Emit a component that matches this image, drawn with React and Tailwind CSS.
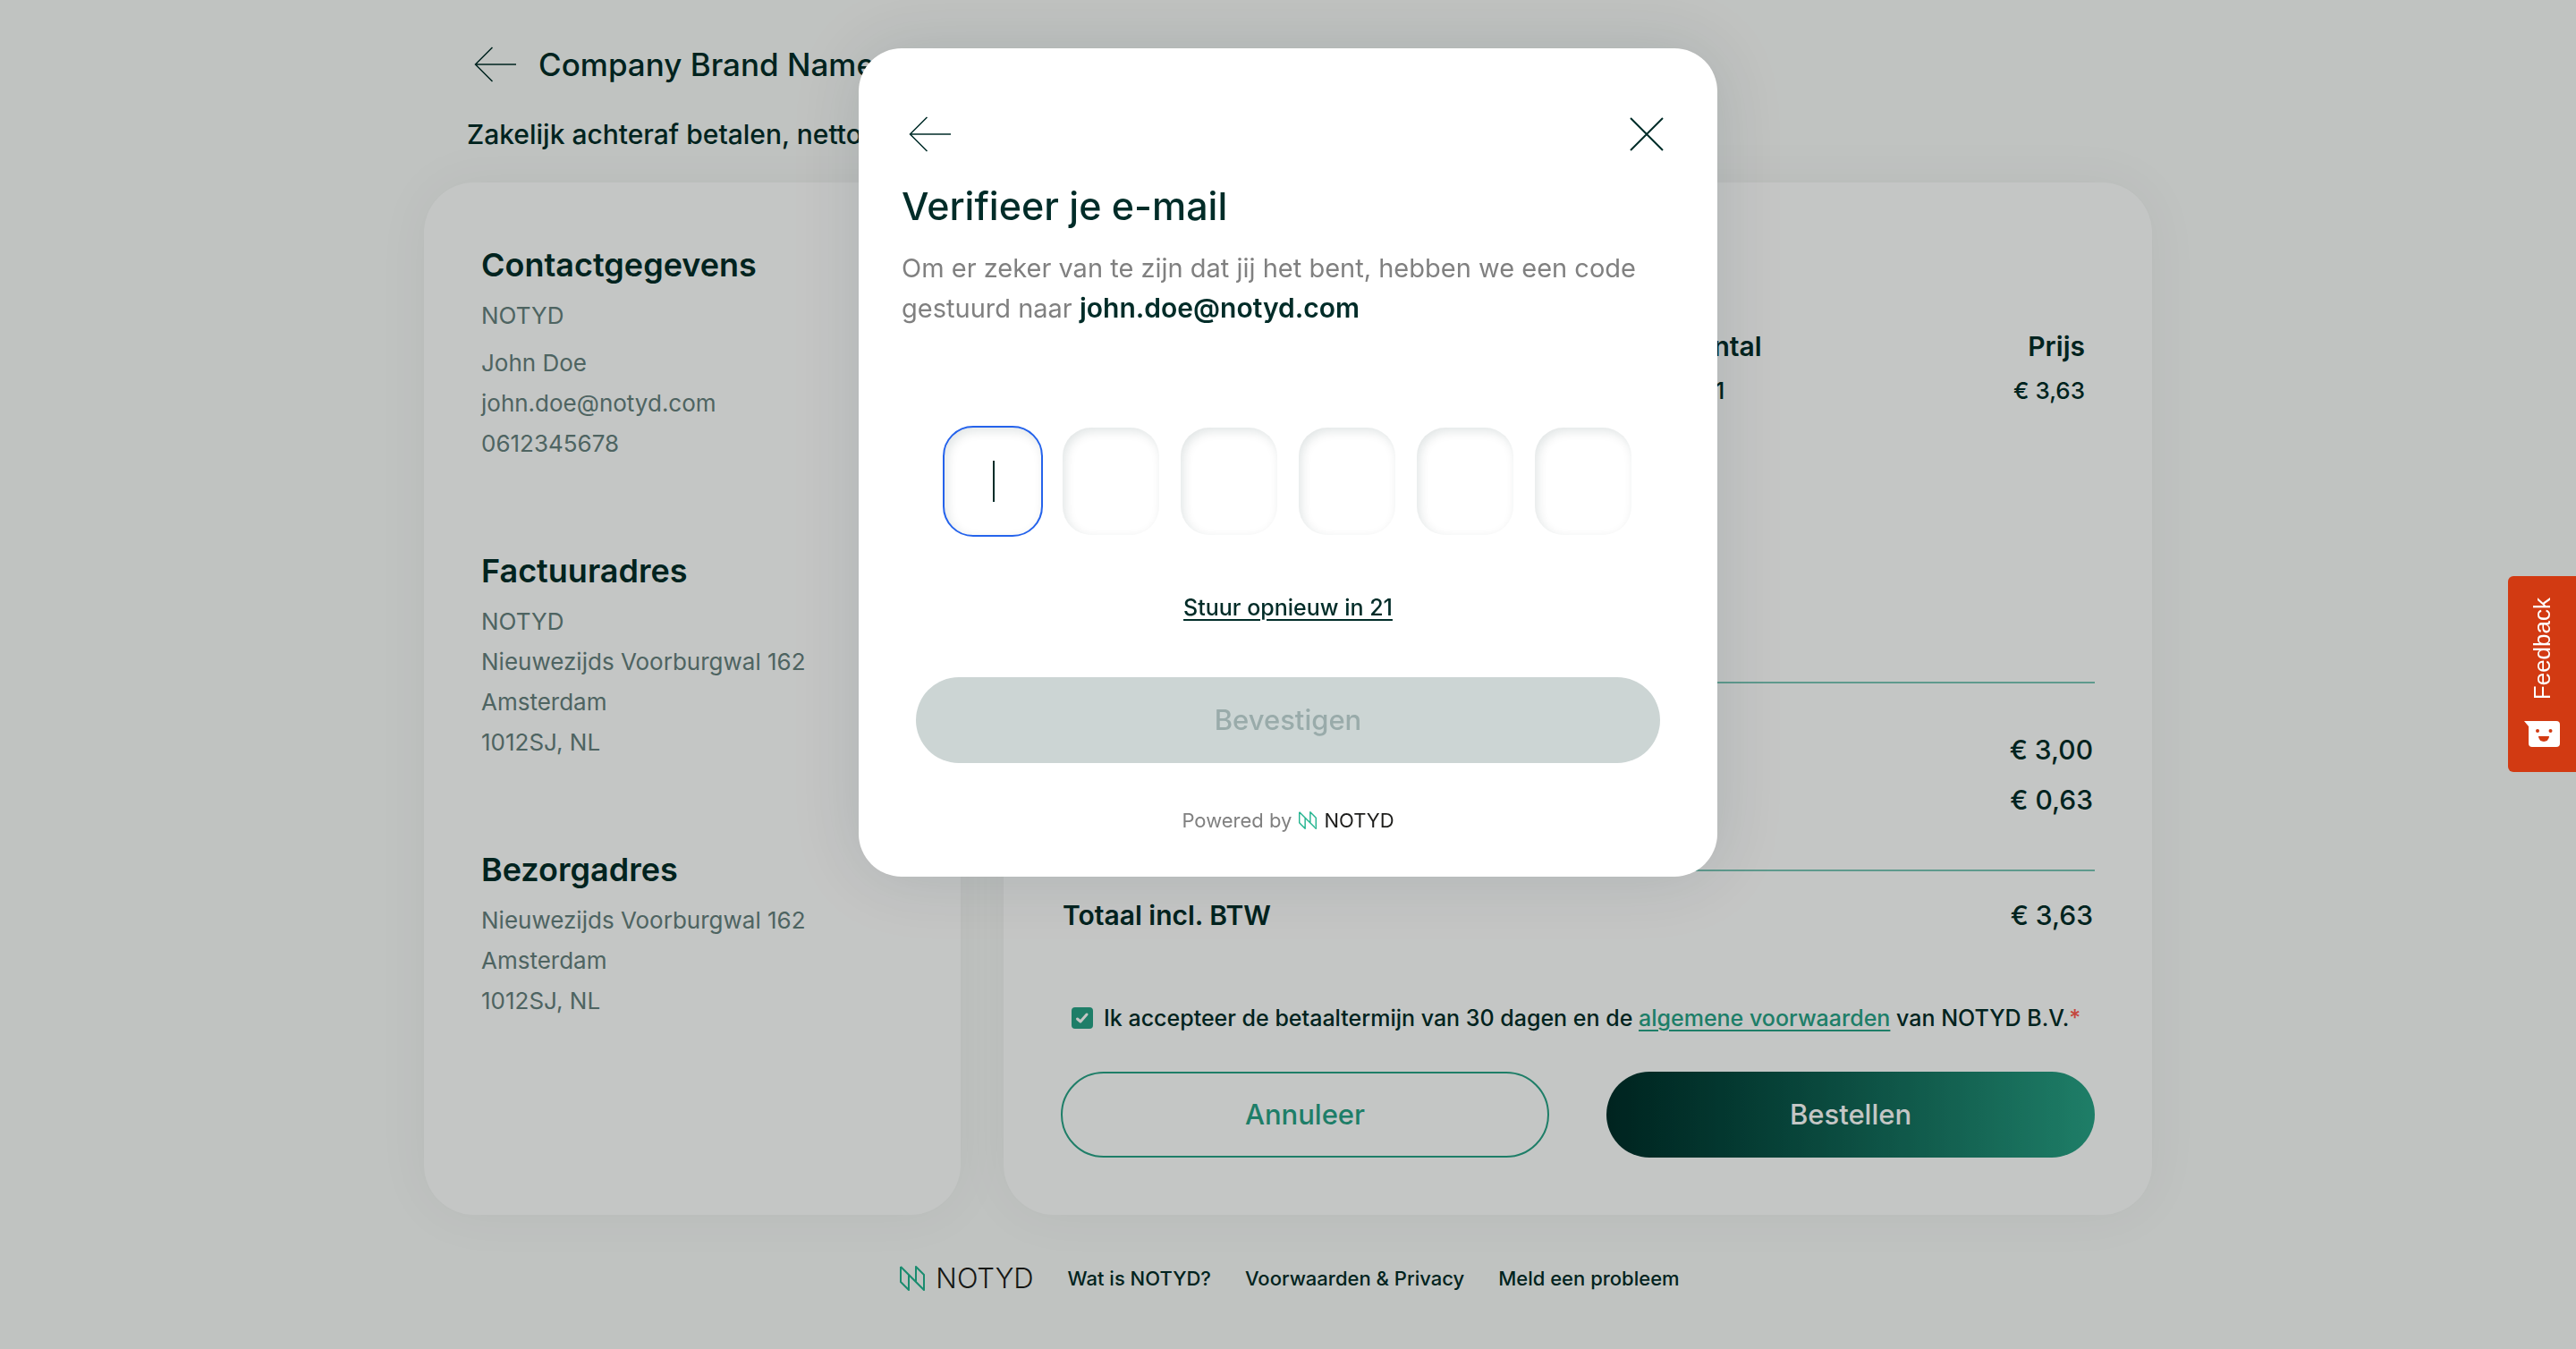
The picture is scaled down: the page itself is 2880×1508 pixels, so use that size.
import React from "react";

const FONT = "font-['Inter','Liberation_Sans',sans-serif]";

function BackArrow() {
  return (
    <svg width="48" height="40" viewBox="0 0 48 40" fill="none" stroke="currentColor" strokeWidth="1.500" aria-hidden="true">
      <path d="M47 20H2M20.500 1 1.500 20l19 19" />
    </svg>
  );
}

function LogoMark({ className }) {
  return (
    <svg viewBox="0 0 28 28" className={className} fill="none" stroke="#23b48f" strokeWidth="2" strokeLinejoin="round" aria-hidden="true">
      <path d="M1 1v17l9 9V10M1 1l26 26V10l-9-9v17" />
    </svg>
  );
}

function Address({ title, children, className }) {
  return (
    <section className={className}>
      <h2 className="text-[36px] leading-[48px] font-semibold">{title}</h2>
      <div className="text-[26px] leading-[45px] text-[#66807e]">{children}</div>
    </section>
  );
}

function Checkout() {
  return (
    <div className="mx-auto flex w-full max-w-[1932px] flex-col text-[#002c28]">
      <header className="px-12 pt-12">
        <div className="flex items-center gap-6 pl-2">
          <button type="button" aria-label="Terug"><BackArrow /></button>
          <h1 className="text-[35px] leading-[48px] font-medium">Company Brand Name</h1>
        </div>
        <p className="mt-8 text-[30px] leading-[44px] font-medium">Zakelijk achteraf betalen, netto 30 dagen</p>
      </header>

      <main className="mt-8 flex gap-12">
        <div className="w-[600px] shrink-0 rounded-[56px] bg-white px-16 pt-[68px] pb-[200px] shadow-[0_0_60px_rgba(0,44,40,0.05)]">
          <Address title="Contactgegevens">
            <p className="pt-2.5 pb-2">NOTYD</p>
            <p>John Doe</p>
            <p>john.doe@notyd.com</p>
            <p>0612345678</p>
          </Address>
          <Address title="Factuuradres" className="mt-24">
            <p className="pt-2.5">NOTYD</p>
            <p>Nieuwezijds Voorburgwal 162</p>
            <p>Amsterdam</p>
            <p>1012SJ, NL</p>
          </Address>
          <Address title="Bezorgadres" className="mt-24">
            <p className="pt-2.5">Nieuwezijds Voorburgwal 162</p>
            <p>Amsterdam</p>
            <p>1012SJ, NL</p>
          </Address>
        </div>

        <div className="flex flex-1 flex-col rounded-[56px] bg-white px-16 pt-[158px] pb-16 shadow-[0_0_60px_rgba(0,44,40,0.05)]">
          <table className="w-full table-fixed">
            <thead>
              <tr className="text-[30px] leading-[50px]">
                <th className="text-left font-semibold">Product</th>
                <th className="w-[220px] text-center font-semibold">Aantal</th>
                <th className="w-[309px] pr-[11px] text-right font-semibold">Prijs</th>
              </tr>
            </thead>
            <tbody>
              <tr className="text-[26px] leading-[50px] font-medium">
                <td>Product</td>
                <td className="text-center">1</td>
                <td className="pr-[11px] text-right">€ 3,63</td>
              </tr>
            </tbody>
          </table>
          <dl className="mt-[300px] flex flex-col border-t-2 border-[#7bc6b7] pt-[46px] text-[30px] leading-[56px]">
            <div className="flex justify-between px-0.5"><dt>Totaal excl. BTW</dt><dd className="font-medium">€ 3,00</dd></div>
            <div className="flex justify-between px-0.5"><dt>BTW</dt><dd className="font-medium">€ 0,63</dd></div>
            <div className="mt-[50px] flex justify-between border-t-2 border-[#7bc6b7] px-0.5 pt-[21px]"><dt className="font-semibold">Totaal incl. BTW</dt><dd className="font-medium">€ 3,63</dd></div>
          </dl>
          <div className="mt-[67px] flex items-center gap-3 pl-3 text-[25px] leading-[40px] font-medium">
            <div className="relative size-6">
              <input id="terms" type="checkbox" defaultChecked className="block size-6 appearance-none rounded bg-[#28a286]" />
              <svg viewBox="0 0 24 24" className="pointer-events-none absolute inset-0 size-6" fill="none" stroke="white" strokeWidth="3" strokeLinecap="round" strokeLinejoin="round" aria-hidden="true">
                <path d="m6.500 13 3.500 3 7-8" />
              </svg>
            </div>
            <label htmlFor="terms" className="whitespace-nowrap">
              Ik accepteer de betaaltermijn van 30 dagen en de <a href="#voorwaarden" className="text-[#28a286] underline underline-offset-4">algemene voorwaarden</a> van NOTYD B.V.<span className="text-[#ff5a50]">*</span>
            </label>
          </div>
          <div className="mt-10 grid grid-cols-2 gap-16 text-[31px] font-medium">
            <button type="button" className="h-24 rounded-full border-2 border-[#28a286] text-[#28a286]">Annuleer</button>
            <button type="button" className="h-24 rounded-full bg-linear-to-r from-[#002c28] to-[#28a286] text-white">Bestellen</button>
          </div>
        </div>
      </main>

      <footer className="mt-12 flex items-center justify-center gap-[38px] pl-1 text-[22px] leading-[46px] font-medium">
        <div className="flex items-center gap-3 text-[31px] font-light text-[#1d1d1b]">
          <LogoMark className="size-7" />
          NOTYD
        </div>
        <a href="#wat">Wat is NOTYD?</a>
        <a href="#privacy">Voorwaarden &amp; Privacy</a>
        <a href="#probleem">Meld een probleem</a>
      </footer>
    </div>
  );
}

function FeedbackTab() {
  return (
    <button type="button" className="fixed top-[644px] right-0 z-20 flex w-[76px] flex-col items-center gap-6 rounded-l-md bg-[#d23a12] pt-6 pb-7 font-['Liberation_Sans',sans-serif] text-[26px] leading-8 text-white">
      <span className="rotate-180 [writing-mode:vertical-rl]">Feedback</span>
      <svg width="40" height="29" viewBox="0 0 40 29" aria-hidden="true">
        <path fill="white" d="M0 0h36a4 4 0 0 1 4 4v21a4 4 0 0 1-4 4H9a4 4 0 0 1-4-4V6z" />
        <circle cx="15" cy="11" r="2" fill="#d23a12" />
        <circle cx="29.500" cy="11" r="2" fill="#d23a12" />
        <path fill="#d23a12" d="M16 17h12a6 6 0 0 1-12 0z" />
      </svg>
    </button>
  );
}

function VerifyDialog() {
  return (
    <div className="fixed inset-0 z-10 flex items-start justify-center bg-[#000a04]/23 pt-[54px]">
      <div role="dialog" aria-modal="true" aria-labelledby="verify-title" className="w-full max-w-[960px] rounded-[48px] bg-white px-12 pt-[76px] pb-[42px] text-[#002c28] shadow-[0_0_80px_rgba(0,44,60,0.12)]">
        <div className="flex items-center justify-between pr-3 pl-2">
          <button type="button" aria-label="Terug"><BackArrow /></button>
          <button type="button" aria-label="Sluiten">
            <svg width="38" height="38" viewBox="0 0 38 38" stroke="currentColor" strokeWidth="2" aria-hidden="true"><path d="m1 1 36 36M37 1 1 37" /></svg>
          </button>
        </div>
        <h2 id="verify-title" className="mt-[30px] text-[43px] leading-[60px] font-medium">Verifieer je e-mail</h2>
        <p className="mt-[17px] text-[29px] leading-[45px] text-[#808080]">
          Om er zeker van te zijn dat jij het bent, hebben we een code gestuurd naar{" "}
          <strong className="text-[30px] font-semibold text-[#002c28]">john.doe@notyd.com</strong>
        </p>
        <div className="mt-[111px] flex justify-center gap-6">
          {[1, 2, 3, 4, 5, 6].map((n) => (
            <div key={n} className="relative">
              <input
                aria-label={`Cijfer ${n}`}
                maxLength={1}
                inputMode="numeric"
                className={
                  n === 1
                    ? "block h-[120px] w-[108px] rounded-[32px] text-center text-[38px] shadow-[inset_3px_4px_12px_rgba(0,44,40,0.12)] outline-2 outline-[#2563eb]"
                    : "block h-[120px] w-[108px] rounded-[32px] text-center text-[38px] shadow-[inset_3px_4px_12px_rgba(0,44,40,0.12)]"
                }
              />
              {n === 1 && <span className="absolute top-[37px] left-[54px] h-[46px] w-0.5 bg-[#002c28]" />}
            </div>
          ))}
        </div>
        <div className="mt-[61px] text-center">
          <button type="button" className="text-[25px] leading-[40px] font-medium underline underline-offset-4">Stuur opnieuw in 21</button>
        </div>
        <div className="mt-[58px] px-4">
          <button type="button" disabled className="h-24 w-full rounded-full bg-[#ccd5d4] text-[31px] font-medium text-[#99abaa]">Bevestigen</button>
        </div>
        <div className="mt-[43px] flex items-center justify-center gap-2 text-[22px] leading-[42px] text-[#808080]">
          Powered by
          <LogoMark className="size-5" />
          <span className="text-[#1d1d1b]">NOTYD</span>
        </div>
      </div>
    </div>
  );
}

export default function App() {
  return (
    <div className={`min-h-screen bg-[#fafbfa] ${FONT}`}>
      <Checkout />
      <VerifyDialog />
      <FeedbackTab />
    </div>
  );
}
